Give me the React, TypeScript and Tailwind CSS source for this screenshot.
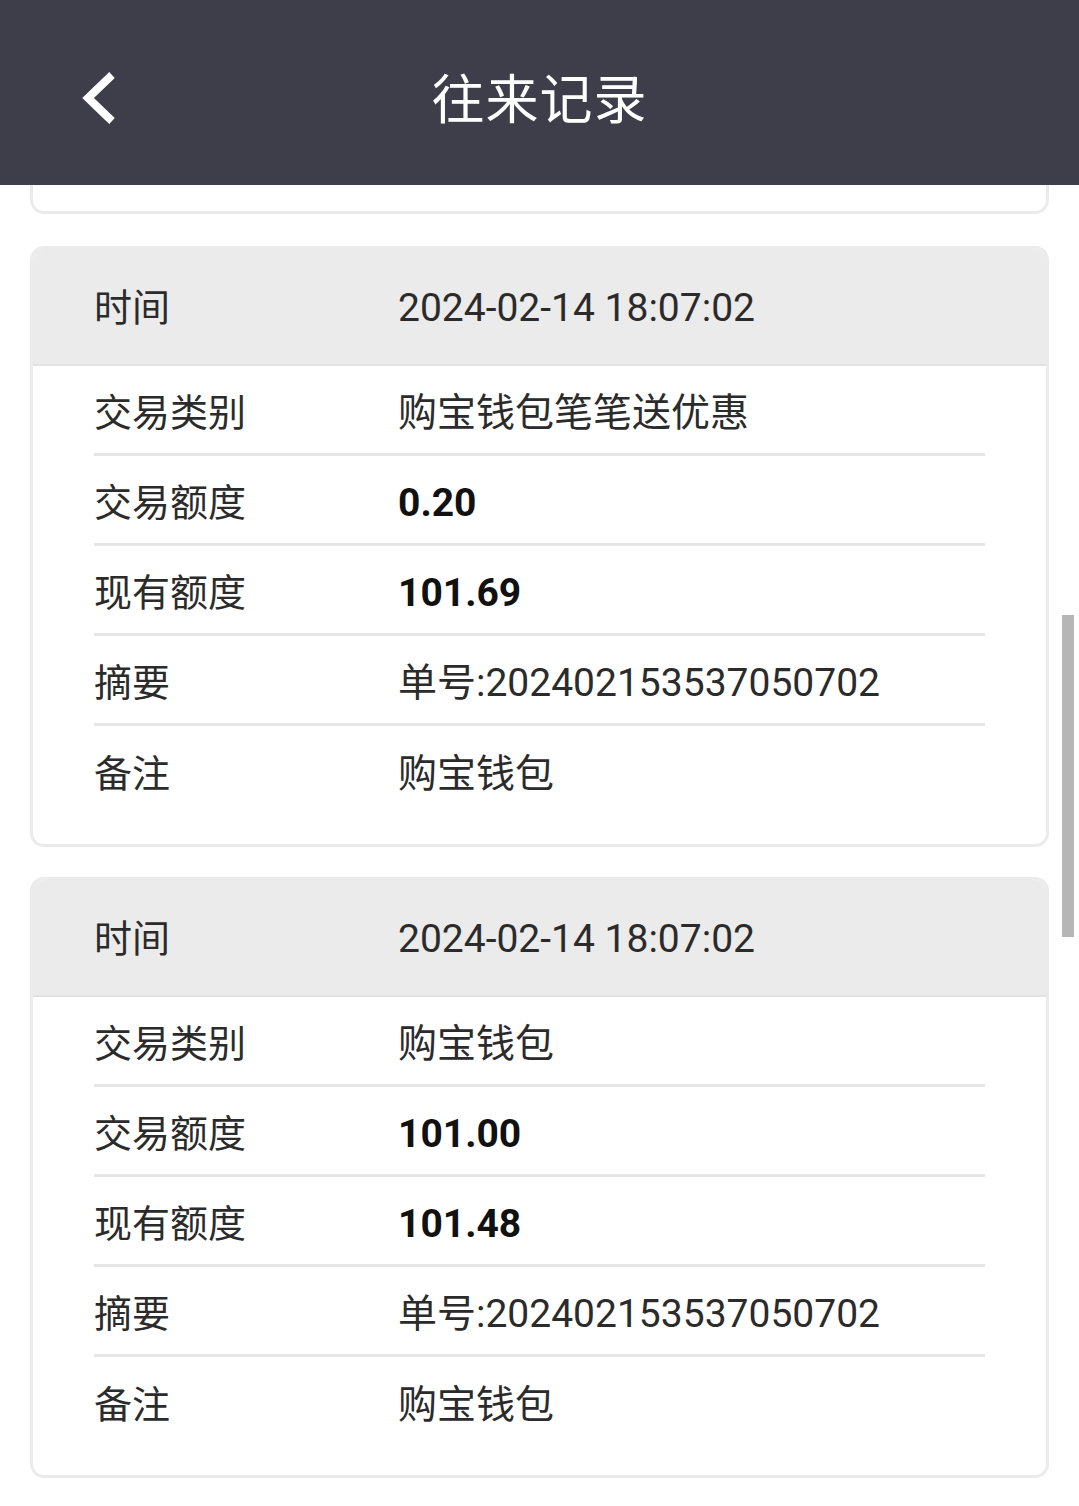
const records = [
  {
    time: '2024-02-14 18:07:02',
    type: '购宝钱包笔笔送优惠',
    amount: '0.20',
    balance: '101.69',
    summary: '单号:202402153537050702',
    note: '购宝钱包',
  },
  {
    time: '2024-02-14 18:07:02',
    type: '购宝钱包',
    amount: '101.00',
    balance: '101.48',
    summary: '单号:202402153537050702',
    note: '购宝钱包',
  },
]

const font = "font-['Roboto','Noto_Sans_CJK_SC',sans-serif]"

function Row({ label, value, bold, last }: { label: string; value: string; bold?: boolean; last?: boolean }) {
  return (
    <div className={`flex items-center h-[90px] pt-[7px] ${last ? '' : 'border-b-[3px] border-[#e6e6e6]'}`}>
      <span className="w-[304px] shrink-0 text-[38px] text-[#2b2b2b]">{label}</span>
      <span className={`text-[39px] ${bold ? 'font-bold text-[#111]' : 'text-[#2b2b2b]'}`}>{value}</span>
    </div>
  )
}

function RecordCard({ r }: { r: (typeof records)[number] }) {
  return (
    <div className="mx-[30px] border-[3px] border-[#ebebeb] rounded-[14px] overflow-hidden bg-white">
      <div className="flex items-center h-[117px] pt-[4px] bg-[#ebebeb] px-[61px] border-b-[2px] border-[#e2e2e2]">
        <span className="w-[304px] shrink-0 text-[38px] text-[#2b2b2b]">时间</span>
        <span className="text-[39px] text-[#2b2b2b]">{r.time}</span>
      </div>
      <div className="px-[61px] pb-[28px]">
        <Row label="交易类别" value={r.type} />
        <Row label="交易额度" value={r.amount} bold />
        <Row label="现有额度" value={r.balance} bold />
        <Row label="摘要" value={r.summary} />
        <Row label="备注" value={r.note} last />
      </div>
    </div>
  )
}

export default function App() {
  return (
    <div className={`relative w-[1079px] h-[1506px] bg-white overflow-hidden ${font}`}>
      <header className="relative flex items-center justify-center h-[185px] pt-[18px] bg-[#3e3d4a]">
        <svg className="absolute left-[78px] top-[68px]" width="44" height="60" viewBox="0 0 44 60">
          <polyline points="34,7 10,30 34,53" fill="none" stroke="#fff" strokeWidth="8" strokeLinejoin="miter" />
        </svg>
        <h1 className="text-[53px] text-white tracking-[1px]">往来记录</h1>
      </header>

      <div className="mx-[30px] h-[29px] border-x-[3px] border-b-[3px] border-[#ebebeb] rounded-b-[14px]" />

      <div className="flex flex-col gap-[30px] mt-[32px]">
        {records.map((r, i) => (
          <RecordCard key={i} r={r} />
        ))}
      </div>

      <div className="absolute right-[5px] top-[615px] w-[12px] h-[322px] bg-[#b6b6b6]" />
    </div>
  )
}
